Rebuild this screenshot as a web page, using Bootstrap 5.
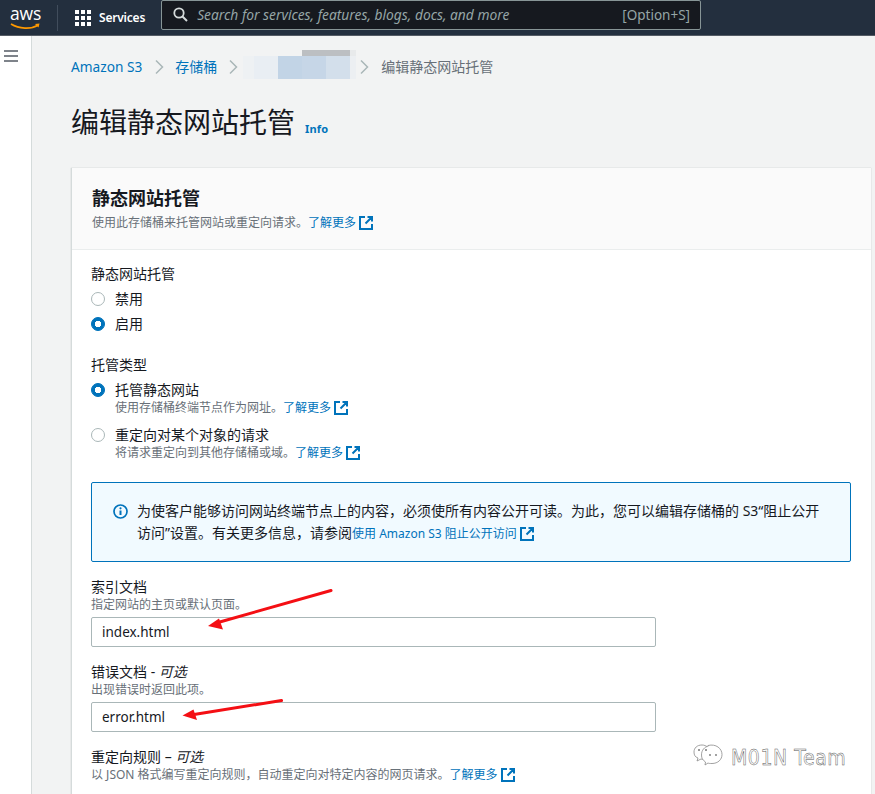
<!doctype html>
<html lang="zh">
<head>
<meta charset="utf-8">
<title>编辑静态网站托管</title>
<link rel="stylesheet" href="https://cdn.jsdelivr.net/npm/bootstrap@5.3.0/dist/css/bootstrap.min.css">
<style>
html,body{height:794px;overflow:hidden}
body{font-family:"Noto Sans","Noto Sans CJK SC",sans-serif;font-size:14px;line-height:20px;color:#16191f;background:#f2f3f3;position:relative}
a{color:#0073bb;text-decoration:none}
.topbar{height:36px;background:#232f3e;border-bottom:1px solid #545b64;padding:0 174px 0 10px}
.aws-logo{width:31px;height:24px}
.aws-word{font:400 17.5px/15px "Open Sans",sans-serif;color:#fff;letter-spacing:-.2px;display:block;height:17px}
.top-sep{width:1px;height:26px;background:#414d5c;margin:0 17px 0 16px}
.svc-grid{display:grid;grid-template-columns:repeat(3,4px);gap:2px;width:16px}
.svc-grid i{width:4px;height:4px;background:#fff;display:block}
.svc-label{color:#fff;font-size:12px;font-weight:600;letter-spacing:-.2px;margin-left:8px;margin-right:16px}
.search-box{height:30px;flex:1;background:#16191f;border:1px solid #879596;border-radius:2px;margin-top:-6px;padding:0 10px 0 11px;color:#aab7b8}
.search-hint{font-style:italic;margin-left:9px;flex:1;color:#95a5a6;font-size:13.8px}
.search-key{color:#95a5a6;font-size:13.5px}
.side-rail{width:32px;height:758px;background:#fff;border-right:1px solid #d5dbdb;padding:14px 0 0 4px;flex:none}
.main-area{flex:1;padding:20px 4px 0 39px;min-width:0}
.crumbs{height:22px;line-height:22px;margin:0;padding:0;flex-wrap:nowrap}
.crumbs .breadcrumb-item{padding:0;line-height:22px}
.crumbs .breadcrumb-item::before{display:none}
.crumb-root{font-size:13.7px}
.crumbs .chev{margin:0 11px;display:block}
.crumbs .chev-a{margin-left:13px}
.crumbs .chev-b{margin-left:12px}
.crumbs .chev-c{margin:0 12px 0 4px}
.crumb-now{color:#687078}
.blurname{width:113px;height:23px;margin:0 0 0 -6px;position:relative;background:linear-gradient(90deg,#eef1f3 0 11px,#e9eef3 11px 35px,#c2d4e6 35px 59px,#c6d6e7 59px 83px,#d3dfeb 83px 107px,#eceff2 107px)}
.blurname::before{content:"";position:absolute;left:59px;top:-6px;width:54px;height:6px;background:linear-gradient(90deg,#bcbfc2 0 48px,#e8eaeb 48px)}
.page-title{font-size:28px;line-height:36px;height:36px;font-weight:400;margin:26px 0 28px;color:#16191f}
.info-link{font-size:11px;font-weight:700;margin-left:10px;position:relative;top:0;letter-spacing:.2px}
.panel{border:0;border-radius:0;border-left:1px solid #d5dbdb;box-shadow:0 0 1px rgba(0,28,36,.25);background:#fff}
.panel-head{background:#fafafa;border:0;border-bottom:1px solid #eaeded;border-radius:0!important;padding:19px 20px 19px;height:82px}
.panel-title{font-size:18px;line-height:22px;font-weight:700;margin:0 0 6px}
.hint{font-size:12px;line-height:16px;color:#687078;display:block}
.hint a{color:#0073bb}
.ext{margin-left:3px;vertical-align:-3px}
.panel-main{padding:14px 19px 11px}
.fld-label{display:block;line-height:20px;margin:0;color:#16191f}
.type-label{margin-top:21px}
.opt{min-height:20px;padding-left:24px;margin:5px 0 0;line-height:20px}
.opt-second{margin-top:9px}
.opt .form-check-input{width:14px;height:14px;margin:3px 0 0 -24px;border:1px solid #aab7b8;background-color:#fff;float:left}
.opt .form-check-input:checked{background-color:#0073bb;border-color:#0073bb;background-image:radial-gradient(circle,#fff 0 3px,transparent 3.5px)}
.notice{background:#f1faff;border:1px solid #0073bb;border-radius:2px;padding:17px 21px;margin:21px 0 15px;height:80px;line-height:22px;color:#16191f;gap:9px;width:760px}
.notice svg.i-ic{flex:none;margin-top:4px}
.notice-link{font-size:12px}
.doc-input{width:565px;height:30px;border:1px solid #aab7b8;border-radius:2px;padding:0 10px;font-size:13.5px;line-height:28px;color:#16191f;margin-top:4px;background:#fff}
.gap-fld{margin-top:15px}
.overlay-arrows{position:absolute;left:0;top:0;pointer-events:none}
.mark-team{position:absolute;left:731px;top:745px;font:400 22px/26px "DejaVu Sans",sans-serif;letter-spacing:.6px;color:#fff;-webkit-text-stroke:.5px #555;white-space:nowrap;transform:scaleX(.86);transform-origin:left center}
</style>
</head>
<body>
<nav class="topbar d-flex align-items-center">
  <div class="aws-logo">
    <span class="aws-word">aws</span>
    <svg width="31" height="7" viewBox="0 0 31 7" class="d-block"><path d="M1 1C9 6 21 6.500 28 2.300" fill="none" stroke="#f90" stroke-width="1.600"/><path d="M25 1l4.500-.6-1 4.200z" fill="#f90"/></svg>
  </div>
  <span class="top-sep"></span>
  <span class="svc-grid"><i></i><i></i><i></i><i></i><i></i><i></i><i></i><i></i><i></i></span>
  <span class="svc-label">Services</span>
  <div class="search-box d-flex align-items-center">
    <svg width="15" height="15" viewBox="0 0 15 15"><circle cx="6" cy="6" r="4.700" fill="none" stroke="#d5dbdb" stroke-width="1.800"/><path d="M9.500 9.500l4.500 4.500" stroke="#d5dbdb" stroke-width="2"/></svg>
    <span class="search-hint">Search for services, features, blogs, docs, and more</span>
    <span class="search-key">[Option+S]</span>
  </div>
</nav>
<div class="d-flex">
  <aside class="side-rail">
    <svg width="14" height="12" viewBox="0 0 14 12" class="d-block"><path d="M0 1h14M0 6h14M0 11h14" stroke="#545b64" stroke-width="1.700"/></svg>
  </aside>
  <main class="main-area">
    <ol class="breadcrumb crumbs align-items-center">
      <li class="breadcrumb-item crumb-root"><a href="#">Amazon S3</a></li>
      <li><svg class="chev chev-a" width="9" height="16" viewBox="0 0 9 16"><path d="M1 1.500l6.500 6.500-6.500 6.500" fill="none" stroke="#aab7b8" stroke-width="1.500"/></svg></li>
      <li class="breadcrumb-item"><a href="#">存储桶</a></li>
      <li><svg class="chev chev-b" width="9" height="16" viewBox="0 0 9 16"><path d="M1 1.500l6.500 6.500-6.500 6.500" fill="none" stroke="#aab7b8" stroke-width="1.500"/></svg></li>
      <li><div class="blurname"></div></li>
      <li><svg class="chev chev-c" width="9" height="16" viewBox="0 0 9 16"><path d="M1 1.500l6.500 6.500-6.500 6.500" fill="none" stroke="#aab7b8" stroke-width="1.500"/></svg></li>
      <li class="breadcrumb-item crumb-now">编辑静态网站托管</li>
    </ol>
    <h1 class="page-title">编辑静态网站托管<a href="#" class="info-link">Info</a></h1>
    <section class="card panel">
      <header class="card-header panel-head">
        <h2 class="panel-title">静态网站托管</h2>
        <span class="hint">使用此存储桶来托管网站或重定向请求。<a href="#">了解更多<svg class="ext" width="14" height="14" viewBox="0 0 14 14"><path d="M6 1H1v12h12V8M8.500 1H13v4.500M13 1L6.500 7.500" fill="none" stroke="#0073bb" stroke-width="2"/></svg></a></span>
      </header>
      <div class="card-body panel-main">
        <label class="fld-label">静态网站托管</label>
        <div class="form-check opt"><input class="form-check-input" type="radio" name="hosting"><label class="form-check-label">禁用</label></div>
        <div class="form-check opt"><input class="form-check-input" type="radio" name="hosting" checked><label class="form-check-label">启用</label></div>
        <label class="fld-label type-label">托管类型</label>
        <div class="form-check opt"><input class="form-check-input" type="radio" name="kind" checked><label class="form-check-label">托管静态网站</label>
          <span class="hint">使用存储桶终端节点作为网址。<a href="#">了解更多<svg class="ext" width="14" height="14" viewBox="0 0 14 14"><path d="M6 1H1v12h12V8M8.500 1H13v4.500M13 1L6.500 7.500" fill="none" stroke="#0073bb" stroke-width="2"/></svg></a></span></div>
        <div class="form-check opt opt-second"><input class="form-check-input" type="radio" name="kind"><label class="form-check-label">重定向对某个对象的请求</label>
          <span class="hint">将请求重定向到其他存储桶或域。<a href="#">了解更多<svg class="ext" width="14" height="14" viewBox="0 0 14 14"><path d="M6 1H1v12h12V8M8.500 1H13v4.500M13 1L6.500 7.500" fill="none" stroke="#0073bb" stroke-width="2"/></svg></a></span></div>
        <div class="alert notice d-flex" role="alert">
          <svg class="i-ic" width="15" height="15" viewBox="0 0 15 15"><circle cx="7.500" cy="7.500" r="6.500" fill="none" stroke="#0073bb" stroke-width="1.700"/><path d="M7.500 6.500v4.500" stroke="#0073bb" stroke-width="2"/><circle cx="7.500" cy="4.300" r="1.100" fill="#0073bb"/></svg>
          <div>为使客户能够访问网站终端节点上的内容，必须使所有内容公开可读。为此，您可以编辑存储桶的 S3“阻止公开访问”设置。有关更多信息，请参阅<a href="#" class="notice-link">使用 Amazon S3 阻止公开访问<svg class="ext" width="14" height="14" viewBox="0 0 14 14"><path d="M6 1H1v12h12V8M8.500 1H13v4.500M13 1L6.500 7.500" fill="none" stroke="#0073bb" stroke-width="2"/></svg></a></div>
        </div>
        <label class="fld-label">索引文档</label>
        <span class="hint">指定网站的主页或默认页面。</span>
        <input class="form-control doc-input" type="text" value="index.html">
        <label class="fld-label gap-fld">错误文档 - <i>可选</i></label>
        <span class="hint">出现错误时返回此项。</span>
        <input class="form-control doc-input" type="text" value="error.html">
        <label class="fld-label gap-fld">重定向规则 – <i>可选</i></label>
        <span class="hint">以 JSON 格式编写重定向规则，自动重定向对特定内容的网页请求。<a href="#">了解更多<svg class="ext" width="14" height="14" viewBox="0 0 14 14"><path d="M6 1H1v12h12V8M8.500 1H13v4.500M13 1L6.500 7.500" fill="none" stroke="#0073bb" stroke-width="2"/></svg></a></span>
      </div>
    </section>
  </main>
</div>
<svg class="overlay-arrows" width="875" height="794" viewBox="0 0 875 794">
  <path d="M331 590.500L218 622.500" stroke="#f40f14" stroke-width="3" stroke-linecap="round"/>
  <path d="M208 626L219 618.500L223 629.500z" fill="#f40f14"/>
  <path d="M281.500 700.500L194 714.500" stroke="#f40f14" stroke-width="3" stroke-linecap="round"/>
  <path d="M182.500 715.500L193.500 709.500L197 720z" fill="#f40f14"/>
  <g fill="#fff" stroke="#8a8a8a" stroke-width=".8">
    <path d="M711 753c-1-5-5-8-9-8-5 0-8 3-8 7 0 3 1 5 4 6l-1 3 4-2c2 .5 3 .5 4 .3"/>
    <path d="M708 745.500c8-2 14 3 14 9 0 5-4 9-10 9-2 0-3 0-4-.5l-3 2 .5-3c-3-2-4-4-4-7 0-5 3-8 7-9z"/>
  </g>
  <g fill="#777"><circle cx="699" cy="750" r="1"/><circle cx="706" cy="750" r="1"/><circle cx="710" cy="755" r=".9"/><circle cx="716" cy="755" r=".9"/></g>
</svg>
<div class="mark-team">M01N Team</div>
</body>
</html>
